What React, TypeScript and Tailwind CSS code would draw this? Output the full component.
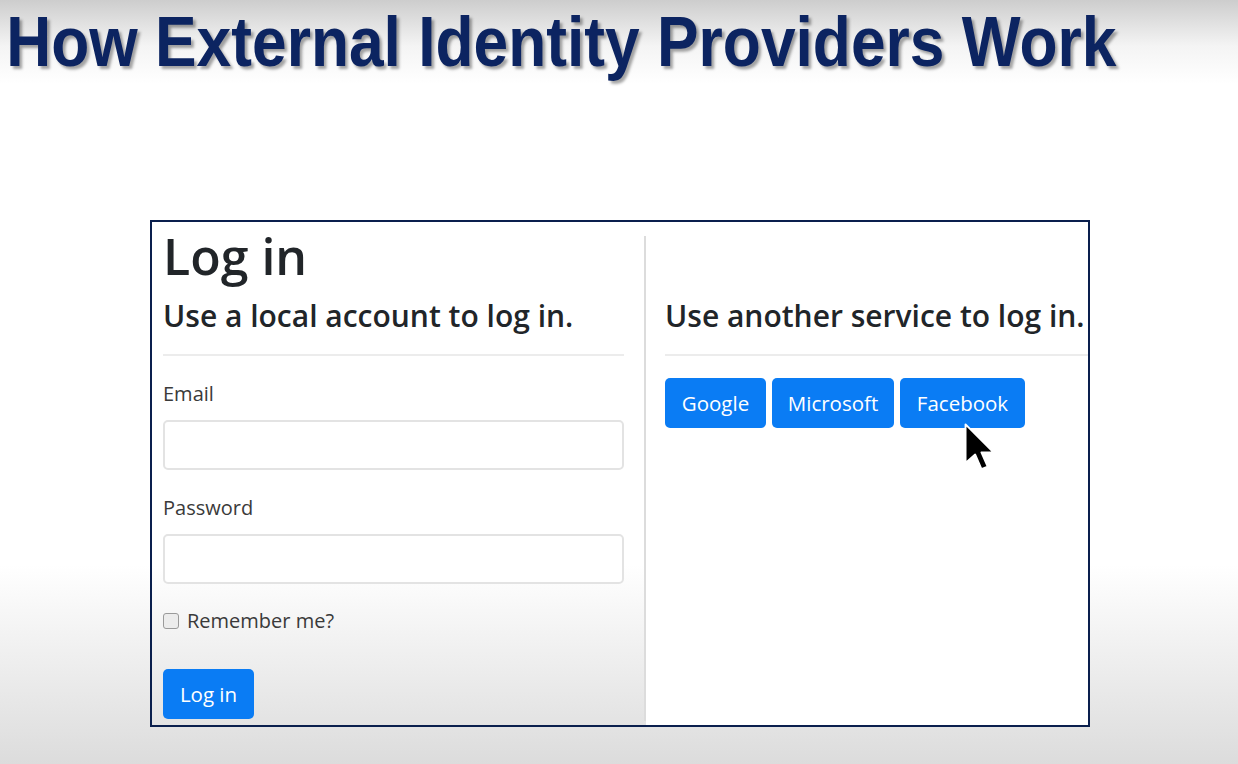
const sans = "font-['Open_Sans','Noto_Sans',sans-serif]";

const ProviderButton = ({
  label,
  width,
  children,
}: {
  label: string;
  width: string;
  children?: React.ReactNode;
}) => (
  <div className="relative">
    <button className={`h-[50px] rounded-[5px] bg-[#0a7cf4] text-[20.5px] leading-none text-white ${width}`}>
      {label}
    </button>
    {children}
  </div>
);

const Cursor = () => (
  <svg
    className="absolute left-[63px] top-[44px]"
    width="34"
    height="53"
    viewBox="-1 -1 14 22"
  >
    <path
      d="M0 0 L0 16 L4 12.5 L6.6 18.6 L9.2 17.5 L6.6 11.6 L11.6 11.6 Z"
      fill="#000"
      stroke="#fff"
      strokeWidth="0.8"
      strokeLinejoin="round"
    />
  </svg>
);

const Field = ({ label, className }: { label: string; className?: string }) => (
  <div className={className}>
    <div className="text-[20px] leading-[33px] text-[#3a3a3a]">{label}</div>
    <div className="mt-[10px] h-[50px] rounded-[5px] border-2 border-[#e3e3e3] bg-white" />
  </div>
);

export default function App() {
  return (
    <div className="h-[764px] w-[1238px] overflow-hidden bg-[linear-gradient(to_bottom,#cdcdcd_0%,#f4f4f4_6%,#ffffff_11%,#ffffff_74%,#dcdcdc_100%)]">
      <h1 className="origin-left scale-x-[0.89] pl-[7px] pt-[7px] font-['Liberation_Sans',Arial,sans-serif] text-[70px] font-bold leading-none whitespace-nowrap text-[#0c2461] [text-shadow:3px_3px_3px_rgba(0,0,0,0.35)]">
        How External Identity Providers Work
      </h1>

      <div className={`ml-[150px] mt-[143px] flex h-[507px] w-[940px] border-2 border-[#0a1f4d] ${sans}`}>
        <div className="w-[492px] pl-[11px] pr-[20px]">
          <div className="pt-[3px] text-[50px] font-semibold leading-[62px] text-[#212529]">Log in</div>
          <div className="mt-[12px] text-[30px] font-semibold leading-[34px] text-[#212529] whitespace-nowrap">
            Use a local account to log in.
          </div>
          <div className="mt-[21px] h-[2px] bg-[#ececec]" />

          <Field label="Email" className="mt-[21px]" />
          <Field label="Password" className="mt-[21px]" />

          <div className="mt-[20px] flex items-center gap-[8px]">
            <div className="h-[16px] w-[16px] rounded-[3px] border border-[#9a9a9a] bg-[#ececec]" />
            <span className="text-[20px] leading-[33px] text-[#3a3a3a]">Remember me?</span>
          </div>

          <button className="mt-[32px] h-[50px] w-[91px] rounded-[5px] bg-[#0a7cf4] text-[20.5px] leading-none text-white">
            Log in
          </button>
        </div>

        <div className="mb-[4px] mt-[14px] w-[2px] bg-[#dcdcdc]" />

        <div className="flex-1 bg-white pl-[19px] pt-[77px]">
          <div className="text-[30px] font-semibold leading-[34px] text-[#212529] whitespace-nowrap">
            Use another service to log in.
          </div>
          <div className="mt-[21px] h-[2px] bg-[#ececec]" />
          <div className="mt-[22px] flex gap-[6px]">
            <ProviderButton label="Google" width="w-[101px]" />
            <ProviderButton label="Microsoft" width="w-[122px]" />
            <ProviderButton label="Facebook" width="w-[125px]">
              <Cursor />
            </ProviderButton>
          </div>
        </div>
      </div>
    </div>
  );
}
